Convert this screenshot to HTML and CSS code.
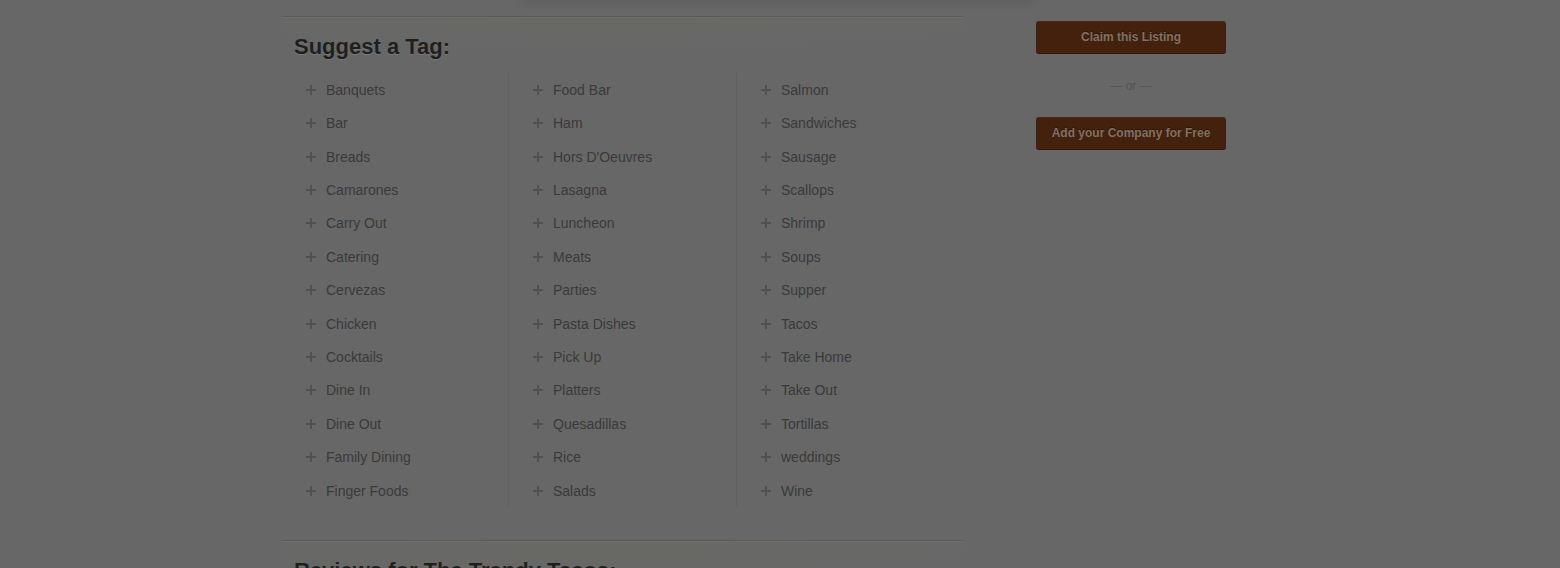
FILE: index.html
```html
<!DOCTYPE html>
<html>
<head>
<meta charset="utf-8">
<link rel="stylesheet" href="styles.css">
</head>
<body>
<div class="page">
  <div class="top-edge"></div>
  <div class="layout">
    <main class="main">
      <section class="block">
        <h2 class="block-title">Suggest a Tag:</h2>
        <div class="tag-cols">
          <ul class="tag-col">
            <li class="tag"><span class="plus"></span>Banquets</li>
            <li class="tag"><span class="plus"></span>Bar</li>
            <li class="tag"><span class="plus"></span>Breads</li>
            <li class="tag"><span class="plus"></span>Camarones</li>
            <li class="tag"><span class="plus"></span>Carry Out</li>
            <li class="tag"><span class="plus"></span>Catering</li>
            <li class="tag"><span class="plus"></span>Cervezas</li>
            <li class="tag"><span class="plus"></span>Chicken</li>
            <li class="tag"><span class="plus"></span>Cocktails</li>
            <li class="tag"><span class="plus"></span>Dine In</li>
            <li class="tag"><span class="plus"></span>Dine Out</li>
            <li class="tag"><span class="plus"></span>Family Dining</li>
            <li class="tag"><span class="plus"></span>Finger Foods</li>
          </ul>
          <ul class="tag-col">
            <li class="tag"><span class="plus"></span>Food Bar</li>
            <li class="tag"><span class="plus"></span>Ham</li>
            <li class="tag"><span class="plus"></span>Hors D'Oeuvres</li>
            <li class="tag"><span class="plus"></span>Lasagna</li>
            <li class="tag"><span class="plus"></span>Luncheon</li>
            <li class="tag"><span class="plus"></span>Meats</li>
            <li class="tag"><span class="plus"></span>Parties</li>
            <li class="tag"><span class="plus"></span>Pasta Dishes</li>
            <li class="tag"><span class="plus"></span>Pick Up</li>
            <li class="tag"><span class="plus"></span>Platters</li>
            <li class="tag"><span class="plus"></span>Quesadillas</li>
            <li class="tag"><span class="plus"></span>Rice</li>
            <li class="tag"><span class="plus"></span>Salads</li>
          </ul>
          <ul class="tag-col">
            <li class="tag"><span class="plus"></span>Salmon</li>
            <li class="tag"><span class="plus"></span>Sandwiches</li>
            <li class="tag"><span class="plus"></span>Sausage</li>
            <li class="tag"><span class="plus"></span>Scallops</li>
            <li class="tag"><span class="plus"></span>Shrimp</li>
            <li class="tag"><span class="plus"></span>Soups</li>
            <li class="tag"><span class="plus"></span>Supper</li>
            <li class="tag"><span class="plus"></span>Tacos</li>
            <li class="tag"><span class="plus"></span>Take Home</li>
            <li class="tag"><span class="plus"></span>Take Out</li>
            <li class="tag"><span class="plus"></span>Tortillas</li>
            <li class="tag"><span class="plus"></span>weddings</li>
            <li class="tag"><span class="plus"></span>Wine</li>
          </ul>
        </div>
      </section>
      <section class="block">
        <h2 class="block-title">Reviews for The Trendy Tacos:</h2>
      </section>
    </main>
    <aside class="side">
      <a class="btn">Claim this Listing</a>
      <div class="or">— or —</div>
      <a class="btn">Add your Company for Free</a>
    </aside>
  </div>
</div>
</body>
</html>
```

FILE: styles.css
```css
html, body {
  margin: 0;
  padding: 0;
  background: #676767;
  height: 100%;
  overflow: hidden;
}
body {
  font-family: "Liberation Sans", Arial, sans-serif;
}
.page {
  width: 996px;
  margin: 0 auto;
}
.top-edge {
  height: 0;
  width: 505px;
  margin-left: 243px;
  box-shadow: 0 0 8px 3px rgba(0, 0, 0, 0.10);
}
.layout {
  display: grid;
  grid-template-columns: 682px 190px;
  column-gap: 72px;
  padding-top: 16px;
}
.block {
  border-top: 1px solid #5a5a5a;
  box-shadow: inset 0 1px 0 #6e6e6e;
  background: radial-gradient(ellipse 420px 30px at 48% 0, rgba(110, 120, 80, 0.16), rgba(110, 120, 80, 0) 100%) no-repeat;
  padding: 17px 0 33px;
}
.block-title {
  margin: 0 0 13px 12px;
  font-size: 22px;
  line-height: 26px;
  font-weight: bold;
  color: #1f1f1f;
  text-shadow: 0 1px 1px rgba(255, 255, 255, 0.12);
}
.tag-cols {
  display: grid;
  grid-template-columns: 226px 228px 228px;
}
.tag-col {
  list-style: none;
  margin: 0;
  padding: 0 0 0 24px;
  border-left: 1px solid #606060;
}
.tag-col:first-child {
  border-left: none;
}
.tag {
  display: flex;
  align-items: center;
  height: 33.42px;
  font-size: 14px;
  color: #3a3a3a;
}
.plus {
  position: relative;
  width: 10px;
  height: 10px;
  margin-right: 10px;
  flex: none;
}
.plus::before, .plus::after {
  content: "";
  position: absolute;
  background: #505050;
}
.plus::before {
  left: 0;
  top: 4px;
  width: 10px;
  height: 2px;
}
.plus::after {
  left: 4px;
  top: 0;
  width: 2px;
  height: 10px;
}
.side {
  display: flex;
  flex-direction: column;
  padding-top: 5px;
}
.btn {
  display: block;
  height: 32px;
  line-height: 32px;
  text-align: center;
  background: #43210d;
  border-bottom: 1px solid #321707;
  border-radius: 3px;
  color: #807166;
  font-size: 12px;
  font-weight: bold;
  text-shadow: 0 -1px 0 rgba(0, 0, 0, 0.35);
  box-shadow: inset 0 1px 0 rgba(255, 255, 255, 0.04);
}
.or {
  height: 63px;
  line-height: 65px;
  text-align: center;
  font-size: 12px;
  color: #555;
}
```
